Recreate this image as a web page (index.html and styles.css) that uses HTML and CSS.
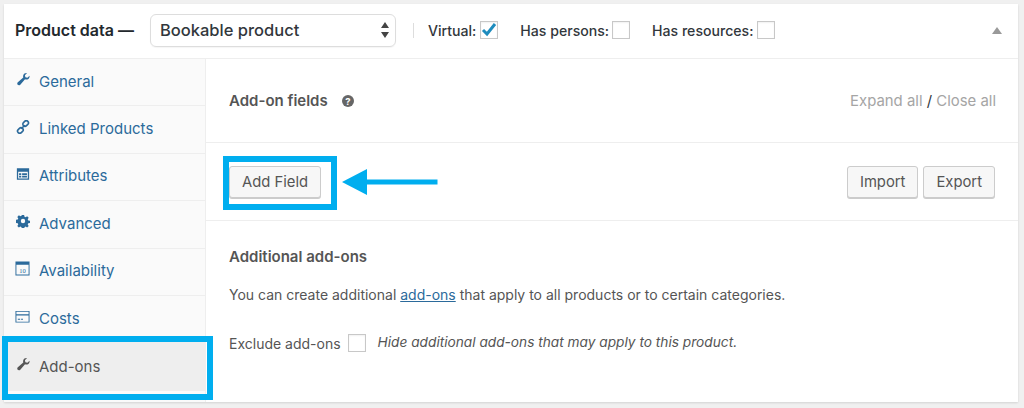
FILE: index.html
```html
<!DOCTYPE html>
<html lang="en">
<head>
<meta charset="utf-8">
<title>Product data</title>
<link rel="stylesheet" href="styles.css">
</head>
<body>
<div class="panel">
  <header class="head">
    <h2 class="title">Product data —</h2>
    <div class="select"><span>Bookable product</span>
      <svg class="updown" width="8" height="16" viewBox="0 0 8 16"><path d="M4 0 8 6H0zM4 16 0 10h8z"/></svg>
    </div>
    <span class="sep"></span>
    <label class="opt opt-virtual">Virtual: <span class="check"><svg width="16" height="14" viewBox="0 0 16 14"><path d="M2 7l4 4 8-10" fill="none" stroke="#1e8cbe" stroke-width="3"/></svg></span></label>
    <label class="opt opt-persons">Has persons: <span class="check"></span></label>
    <label class="opt">Has resources: <span class="check"></span></label>
    <svg class="collapse" width="10" height="7" viewBox="0 0 10 7"><path d="M5 0l5 7H0z"/></svg>
  </header>
  <div class="body">
    <nav class="tabs">
      <a class="tab"><svg class="ico" viewBox="0 0 16 16"><path d="M15.500 4.200c.3 2-.7 3.700-2.500 4.300-1 .3-1.900.2-2.700-.1L4.900 14.500c-.8.900-2.100 1-2.900.2-.8-.8-.7-2.100.1-2.900L8.300 6.400c-.3-.9-.3-1.800 0-2.700C8.900 1.900 10.700.9 12.600 1.200L10.200 3.700l.5 2.400 2.300.5z"/></svg>General</a>
      <a class="tab"><svg class="ico" viewBox="0 0 16 16"><g fill="none" stroke="currentColor" stroke-width="1.800"><rect x="7.500" y="1.500" width="7" height="5" rx="2.500" transform="rotate(-45 11 4)"/><rect x="1.500" y="9.500" width="7" height="5" rx="2.500" transform="rotate(-45 5 12)"/><path d="M6 10l4-4"/></g></svg>Linked Products</a>
      <a class="tab"><svg class="ico" viewBox="0 0 16 16"><path fill-rule="evenodd" d="M1 1.500h14v13H1zM2.500 5.500v7.500h11V5.500zM3.500 7h2.500v2H3.500zM3.500 10h2.500v2H3.500zM7 7h5.500v2H7zM7 10h5.500v2H7z"/></svg>Attributes</a>
      <a class="tab"><svg class="ico" viewBox="0 0 16 16"><path fill-rule="evenodd" d="M6.700 1h2.600l.4 2 1.300.6 1.700-1.100 1.800 1.800-1.100 1.700.6 1.300 2 .4v2.600l-2 .4-.6 1.300 1.100 1.700-1.800 1.800-1.700-1.100-1.300.6-.4 2H6.700l-.4-2-1.300-.6-1.700 1.100-1.800-1.800 1.100-1.700-.6-1.300-2-.4V6.700l2-.4.6-1.300-1.100-1.700 1.800-1.800 1.700 1.100 1.300-.6zM8 5.500a2.500 2.500 0 1 0 0 5 2.500 2.500 0 0 0 0-5z"/></svg>Advanced</a>
      <a class="tab"><svg class="ico ico-wide" viewBox="0 0 16 16"><path fill-rule="evenodd" d="M.5 .5h15v15H.5zM1.500 4v10.500h13V4z"/><text x="8" y="12.500" text-anchor="middle" class="cal">10</text></svg>Availability</a>
      <a class="tab"><svg class="ico ico-wide" viewBox="0 0 16 16"><path fill-rule="evenodd" d="M.5 2h15v12.500H.5zM1.500 3v2.500h13V3zM1.500 7v6.500h13V7zM3 10.500h2.500v1H3zM6.500 10.500h2v1h-2z"/></svg>Costs</a>
      <a class="tab tab-active"><svg class="ico" viewBox="0 0 16 16"><path d="M15.500 4.200c.3 2-.7 3.700-2.500 4.300-1 .3-1.900.2-2.700-.1L4.900 14.500c-.8.900-2.100 1-2.900.2-.8-.8-.7-2.100.1-2.900L8.300 6.400c-.3-.9-.3-1.800 0-2.700C8.900 1.900 10.700.9 12.600 1.200L10.200 3.700l.5 2.400 2.300.5z"/></svg>Add-ons</a>
    </nav>
    <main class="content">
      <section class="row row-fields">
        <h3 class="subhead">Add-on fields <svg class="help" width="12" height="12" viewBox="0 0 12 12"><circle cx="6" cy="6" r="6"/><text x="6" y="9.500" text-anchor="middle" class="q">?</text></svg></h3>
        <div class="links"><a>Expand all</a> <b>/</b> <a>Close all</a></div>
      </section>
      <section class="row row-actions">
        <button class="btn btn-add">Add Field</button>
        <div class="btn-group"><button class="btn">Import</button><button class="btn">Export</button></div>
      </section>
      <section class="extra">
        <h4 class="extra-title">Additional add-ons</h4>
        <p class="extra-text">You can create additional <a>add-ons</a> that apply to all products or to certain categories.</p>
        <div class="exclude"><span>Exclude add-ons</span><span class="check"></span><em>Hide additional add-ons that may apply to this product.</em></div>
      </section>
    </main>
  </div>
  <div class="mark mark-field"></div>
  <svg class="mark-arrow" width="96" height="26" viewBox="0 0 96 26"><path d="M0 13 25 0v10.500h70.500v5H25V26z"/></svg>
  <div class="mark mark-tab"></div>
</div>
</body>
</html>
```

FILE: styles.css
```css
* { box-sizing: border-box; }
html, body { margin: 0; height: 100%; }
body {
  background: #f0f0f0;
  padding: 4px 6px 0 4px;
  font-family: Inter, "Noto Sans", sans-serif;
  font-size: 14px;
  color: #555;
  overflow: hidden;
}
.panel {
  position: relative;
  height: 398px;
  background: #fff;
  display: flex;
  flex-direction: column;
  box-shadow: 0 1px 2px rgba(0,0,0,.12);
}
.head {
  height: 55px;
  flex: none;
  display: flex;
  align-items: center;
  padding: 0 0 2px 11px;
  border-bottom: 1px solid #eee;
  color: #32373c;
}
.title { margin: 0; font-size: 16px; font-weight: 600; color: #23282d; width: 135px; white-space: nowrap; }
.select {
  width: 246px;
  height: 33px;
  border: 1px solid #ddd;
  border-radius: 6px;
  display: flex;
  align-items: center;
  justify-content: space-between;
  padding: 0 6px 0 9px;
  font-size: 16.500px;
  font-weight: 500;
  color: #32373c;
  box-shadow: 0 1px 1px rgba(0,0,0,.04);
}
.updown { fill: #444; }
.sep { width: 1px; height: 15px; background: #ddd; margin: 0 14px 0 17px; }
.opt { display: flex; align-items: center; gap: 4px; font-size: 14.100px; font-weight: 500; margin-right: 21px; white-space: nowrap; }
.opt-virtual { margin-right: 22px; }
.opt-persons { margin-right: 22px; gap: 3px; }
.check {
  width: 18px;
  height: 18px;
  flex: none;
  display: inline-flex;
  align-items: center;
  justify-content: center;
  border: 1px solid #c8c8c8;
  background: #fff;
  box-shadow: inset 0 1px 2px rgba(0,0,0,.06);
}
.collapse { margin-left: auto; margin-right: 16px; fill: #999; }
.body { flex: 1; display: flex; min-height: 0; }
.tabs {
  width: 202px;
  flex: none;
  background: #fafafa;
  border-right: 1px solid #eee;
  display: flex;
  flex-direction: column;
}
.tab {
  height: 47.400px;
  flex: none;
  display: flex;
  align-items: center;
  padding: 0 0 2px 12px;
  gap: 9px;
  color: #2b6a9b;
  font-size: 15px;
  border-bottom: 1px solid #eee;
}
.ico { width: 14px; height: 14px; fill: currentColor; margin-top: -4px; flex: none; }
.ico-wide { width: 15px; height: 15px; margin-left: -1px; }
.cal { font: 7px "Liberation Serif", serif; }
.tab-active { background: #eee; color: #555; border-bottom: 0; }
.content { flex: 1; min-width: 0; display: flex; flex-direction: column; }
.row { display: flex; align-items: center; justify-content: space-between; border-bottom: 1px solid #eee; }
.row-fields { height: 84px; padding: 0 22px 0 23px; }
.row-actions { height: 78px; padding: 0 23px 0 23px; }
.subhead { margin: 0; display: flex; align-items: center; gap: 14px; font-size: 15px; font-weight: 600; color: #555; }
.help { fill: #666; }
.q { fill: #fff; font-size: 9.500px; font-weight: 700; }
.links { font-size: 14.900px; color: #32373c; }
.links a { color: #a5a5a5; }
.links b { font-weight: 400; }
.btn {
  height: 32px;
  padding: 0 12px;
  border: 1px solid #ccc;
  border-radius: 3px;
  background: #f7f7f7;
  box-shadow: 0 1px 0 #ccc;
  font: 14.800px Inter, "Noto Sans", sans-serif;
  color: #555;
}
.btn-group { display: flex; gap: 5px; }
.extra { padding: 26px 23px 0; }
.extra-title { margin: 0; font-size: 15px; font-weight: 600; color: #555; }
.extra-text { margin: 20px 0 0; font-size: 14px; color: #555; }
.extra-text a { color: #2b6a9b; text-decoration: underline; }
.exclude { display: flex; align-items: center; margin-top: 29px; font-size: 14px; }
.exclude span:first-child { margin-top: 3px; }
.exclude .check { margin: 2px 12px 0 7px; }
.exclude em { font-size: 13.700px; }
.mark { position: absolute; border: 6px solid #00aeef; }
.mark-field { left: 219px; top: 152px; width: 114px; height: 54px; }
.mark-tab { left: -2px; top: 332px; width: 211px; height: 64px; }
.mark-arrow { position: absolute; left: 338px; top: 165px; fill: #00aeef; }
```
